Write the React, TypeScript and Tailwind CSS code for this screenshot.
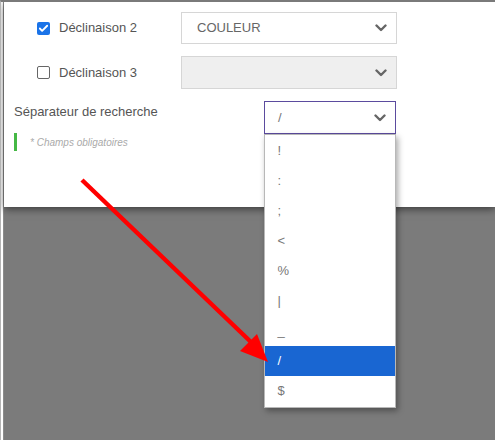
import { Check } from 'lucide-react'

const separators = ['!', ':', ';', '<', '%', '|', '_', '/', '$']

function Chevron() {
  return (
    <svg width="12" height="8" viewBox="0 0 12 8" className="shrink-0">
      <polyline points="1.5,1.5 6,6 10.5,1.5" fill="none" stroke="#666" strokeWidth="2.4" strokeLinecap="round" strokeLinejoin="round" />
    </svg>
  )
}

export default function App() {
  return (
    <div className="relative w-[495px] h-[440px] overflow-hidden bg-white border-t-2 border-[#7a7a7a] border-l border-l-[#b4b4b4] font-['Liberation_Sans',Arial,sans-serif]">
      <div className="ml-[2px] h-full flex flex-col border-l border-[#8c8c8c]">
        {/* form panel */}
        <div className="relative z-10 h-[205px] bg-white shadow-[0_2px_8px_rgba(0,0,0,0.55)] pt-[10px]">
          <div className="flex items-center h-[32px]">
            <div className="w-[177px] pl-[33px] flex items-center gap-[9px]">
              <span className="w-[13px] h-[13px] rounded-[2px] bg-[#1a73e8] flex items-center justify-center">
                <Check className="w-[11px] h-[11px] text-white" strokeWidth={4} />
              </span>
              <span className="text-[13px] text-[#555]">Déclinaison 2</span>
            </div>
            <div className="w-[216px] h-[32px] border border-[#d6d6d6] flex items-center justify-between pl-[15px] pr-[9px]">
              <span className="text-[13px] text-[#666]">COULEUR</span>
              <Chevron />
            </div>
          </div>

          <div className="flex items-center h-[33px] mt-[12px]">
            <div className="w-[177px] pl-[33px] flex items-center gap-[9px]">
              <span className="w-[13px] h-[13px] rounded-[2px] border-[1.5px] border-[#666] bg-white" />
              <span className="text-[13px] text-[#555]">Déclinaison 3</span>
            </div>
            <div className="w-[216px] h-[33px] border border-[#d6d6d6] bg-[#efefef] flex items-center justify-end pr-[9px]">
              <Chevron />
            </div>
          </div>

          <div className="flex items-start mt-[12px]">
            <div className="w-[260px] pl-[10px] pt-[1px] text-[13px] text-[#555]">Séparateur de recherche</div>
            <div className="relative w-[132px] h-[33px] border-[1.5px] border-[#5b4b9e] flex items-center justify-between pl-[13px] pr-[9px]">
              <span className="text-[13px] text-[#777]">/</span>
              <Chevron />
              {/* open list */}
              <ul className="absolute z-20 top-[32px] -left-[1.5px] w-[132px] border border-[#b8b8b8] bg-white pt-[1px] pb-[1px] shadow-[2px_3px_6px_rgba(0,0,0,0.35)]">
                {separators.map((s) => (
                  <li
                    key={s}
                    className={`h-[30px] flex items-center pl-[13px] text-[13px] ${
                      s === '/' ? 'bg-[#1966d2] text-white' : 'text-[#777]'
                    }`}
                  >
                    {s}
                  </li>
                ))}
              </ul>
            </div>
          </div>

          <div className="flex items-center gap-[13px] pl-[10px] mt-[-1px]">
            <span className="w-[3px] h-[18px] bg-[#45b845]" />
            <span className="text-[10px] italic text-[#aaa]">* Champs obligatoires</span>
          </div>
        </div>

        {/* overlay */}
        <div className="flex-1 bg-[#7b7b7b]" />
      </div>

      {/* annotation arrow */}
      <svg className="absolute -top-[2px] -left-px z-30 pointer-events-none" width="495" height="440" viewBox="0 0 495 440">
        <line x1="82" y1="180" x2="252" y2="343" stroke="#ff0000" strokeWidth="4.5" />
        <polygon points="268,362 240,351 257,334" fill="#ff0000" />
      </svg>
    </div>
  )
}
